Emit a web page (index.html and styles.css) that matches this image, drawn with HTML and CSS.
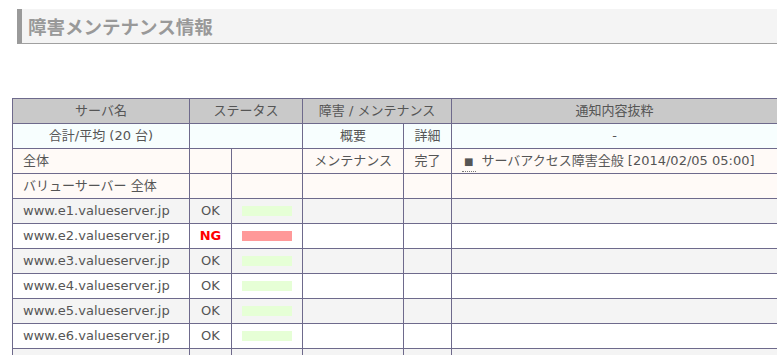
FILE: index.html
```html
<!DOCTYPE html>
<html lang="ja">
<head>
  <meta charset="UTF-8" />
  <title>障害メンテナンス情報</title>
  <meta name="viewport" content="width=device-width, initial-scale=1" />
  <link rel="stylesheet" href="styles.css">
</head>
<body>

  <h2 class="page-title">障害メンテナンス情報</h2>

  <table class="status-table">
    <colgroup>
      <col class="c-name">
      <col class="c-stat">
      <col class="c-bar">
      <col class="c-kind">
      <col class="c-detail">
      <col class="c-notice">
    </colgroup>
    <tr class="head">
      <th>サーバ名</th>
      <th colspan="2">ステータス</th>
      <th colspan="2">障害 / メンテナンス</th>
      <th>通知内容抜粋</th>
    </tr>
    <tr class="total">
      <td class="center">合計/平均 (20 台)</td>
      <td colspan="2"></td>
      <td class="center">概要</td>
      <td class="center">詳細</td>
      <td class="center">-</td>
    </tr>
    <tr class="group">
      <td>全体</td>
      <td></td>
      <td></td>
      <td class="center">メンテナンス</td>
      <td class="center">完了</td>
      <td><span class="mark">■</span>サーバアクセス障害全般 [2014/02/05 05:00]</td>
    </tr>
    <tr class="group">
      <td>バリューサーバー 全体</td>
      <td></td>
      <td></td>
      <td></td>
      <td></td>
      <td></td>
    </tr>

    <!-- サーバ一覧 -->
    <tr class="odd"><td>www.e1.valueserver.jp</td><td class="center">OK</td><td><div class="bar ok"></div></td><td></td><td></td><td></td></tr>
    <tr><td>www.e2.valueserver.jp</td><td class="center ng">NG</td><td><div class="bar ng"></div></td><td></td><td></td><td></td></tr>
    <tr class="odd"><td>www.e3.valueserver.jp</td><td class="center">OK</td><td><div class="bar ok"></div></td><td></td><td></td><td></td></tr>
    <tr><td>www.e4.valueserver.jp</td><td class="center">OK</td><td><div class="bar ok"></div></td><td></td><td></td><td></td></tr>
    <tr class="odd"><td>www.e5.valueserver.jp</td><td class="center">OK</td><td><div class="bar ok"></div></td><td></td><td></td><td></td></tr>
    <tr><td>www.e6.valueserver.jp</td><td class="center">OK</td><td><div class="bar ok"></div></td><td></td><td></td><td></td></tr>
    <tr class="odd"><td></td><td></td><td></td><td></td><td></td><td></td></tr>
  </table>

</body>
</html>
```

FILE: styles.css
```css
html, body {
  overflow: hidden;
}

body {
  margin: 0;
  background: #fff;
  color: #555;
  font-family: 'DejaVu Sans', 'Noto Sans CJK JP', sans-serif;
  font-size: 13px;
}

.page-title {
  margin: 9px 0 0 17px;
  height: 34px;
  line-height: 34px;
  padding-left: 6px;
  background: #f4f4f4;
  border-left: 5px solid #9a9a9a;
  border-bottom: 1px solid #a0a0a0;
  color: #999;
  font-family: 'Noto Sans CJK JP', sans-serif;
  font-size: 18.5px;
  font-weight: bold;
}

/* ステータス表 */
.status-table {
  margin: 54px 0 0 12px;
  width: 765px;
  table-layout: fixed;
  border-collapse: collapse;
}

.c-name { width: 177px; }
.c-stat { width: 42px; }
.c-bar { width: 71px; }
.c-kind { width: 101px; }
.c-detail { width: 48px; }
.c-notice { width: 326px; }

.status-table th,
.status-table td {
  border: 1px solid #6e6a8c;
  height: 24px;
  padding: 0 10px;
  line-height: 24px;
  white-space: nowrap;
  overflow: hidden;
}

.status-table th {
  background: #c9c9c9;
  font-weight: normal;
  text-align: center;
}

.status-table td {
  text-align: left;
}

.status-table td.center {
  text-align: center;
  padding: 0;
}

.total td { background: #f7fefe; }
.group td { background: #fffaf7; }
.odd td { background: #f4f4f4; }

.ng {
  color: #f00;
  font-weight: bold;
}

.bar {
  width: 50px;
  height: 10px;
  margin: 0 auto;
}

.bar.ok { background: #e6ffd6; }
.bar.ng { background: #ff9999; }

/* 通知の先頭マーク */
.mark {
  padding: 0 3px 4px 2px;
  margin-right: 5px;
  border-bottom: 1px dotted #777;
  font-size: 10px;
  line-height: 10px;
}
```
